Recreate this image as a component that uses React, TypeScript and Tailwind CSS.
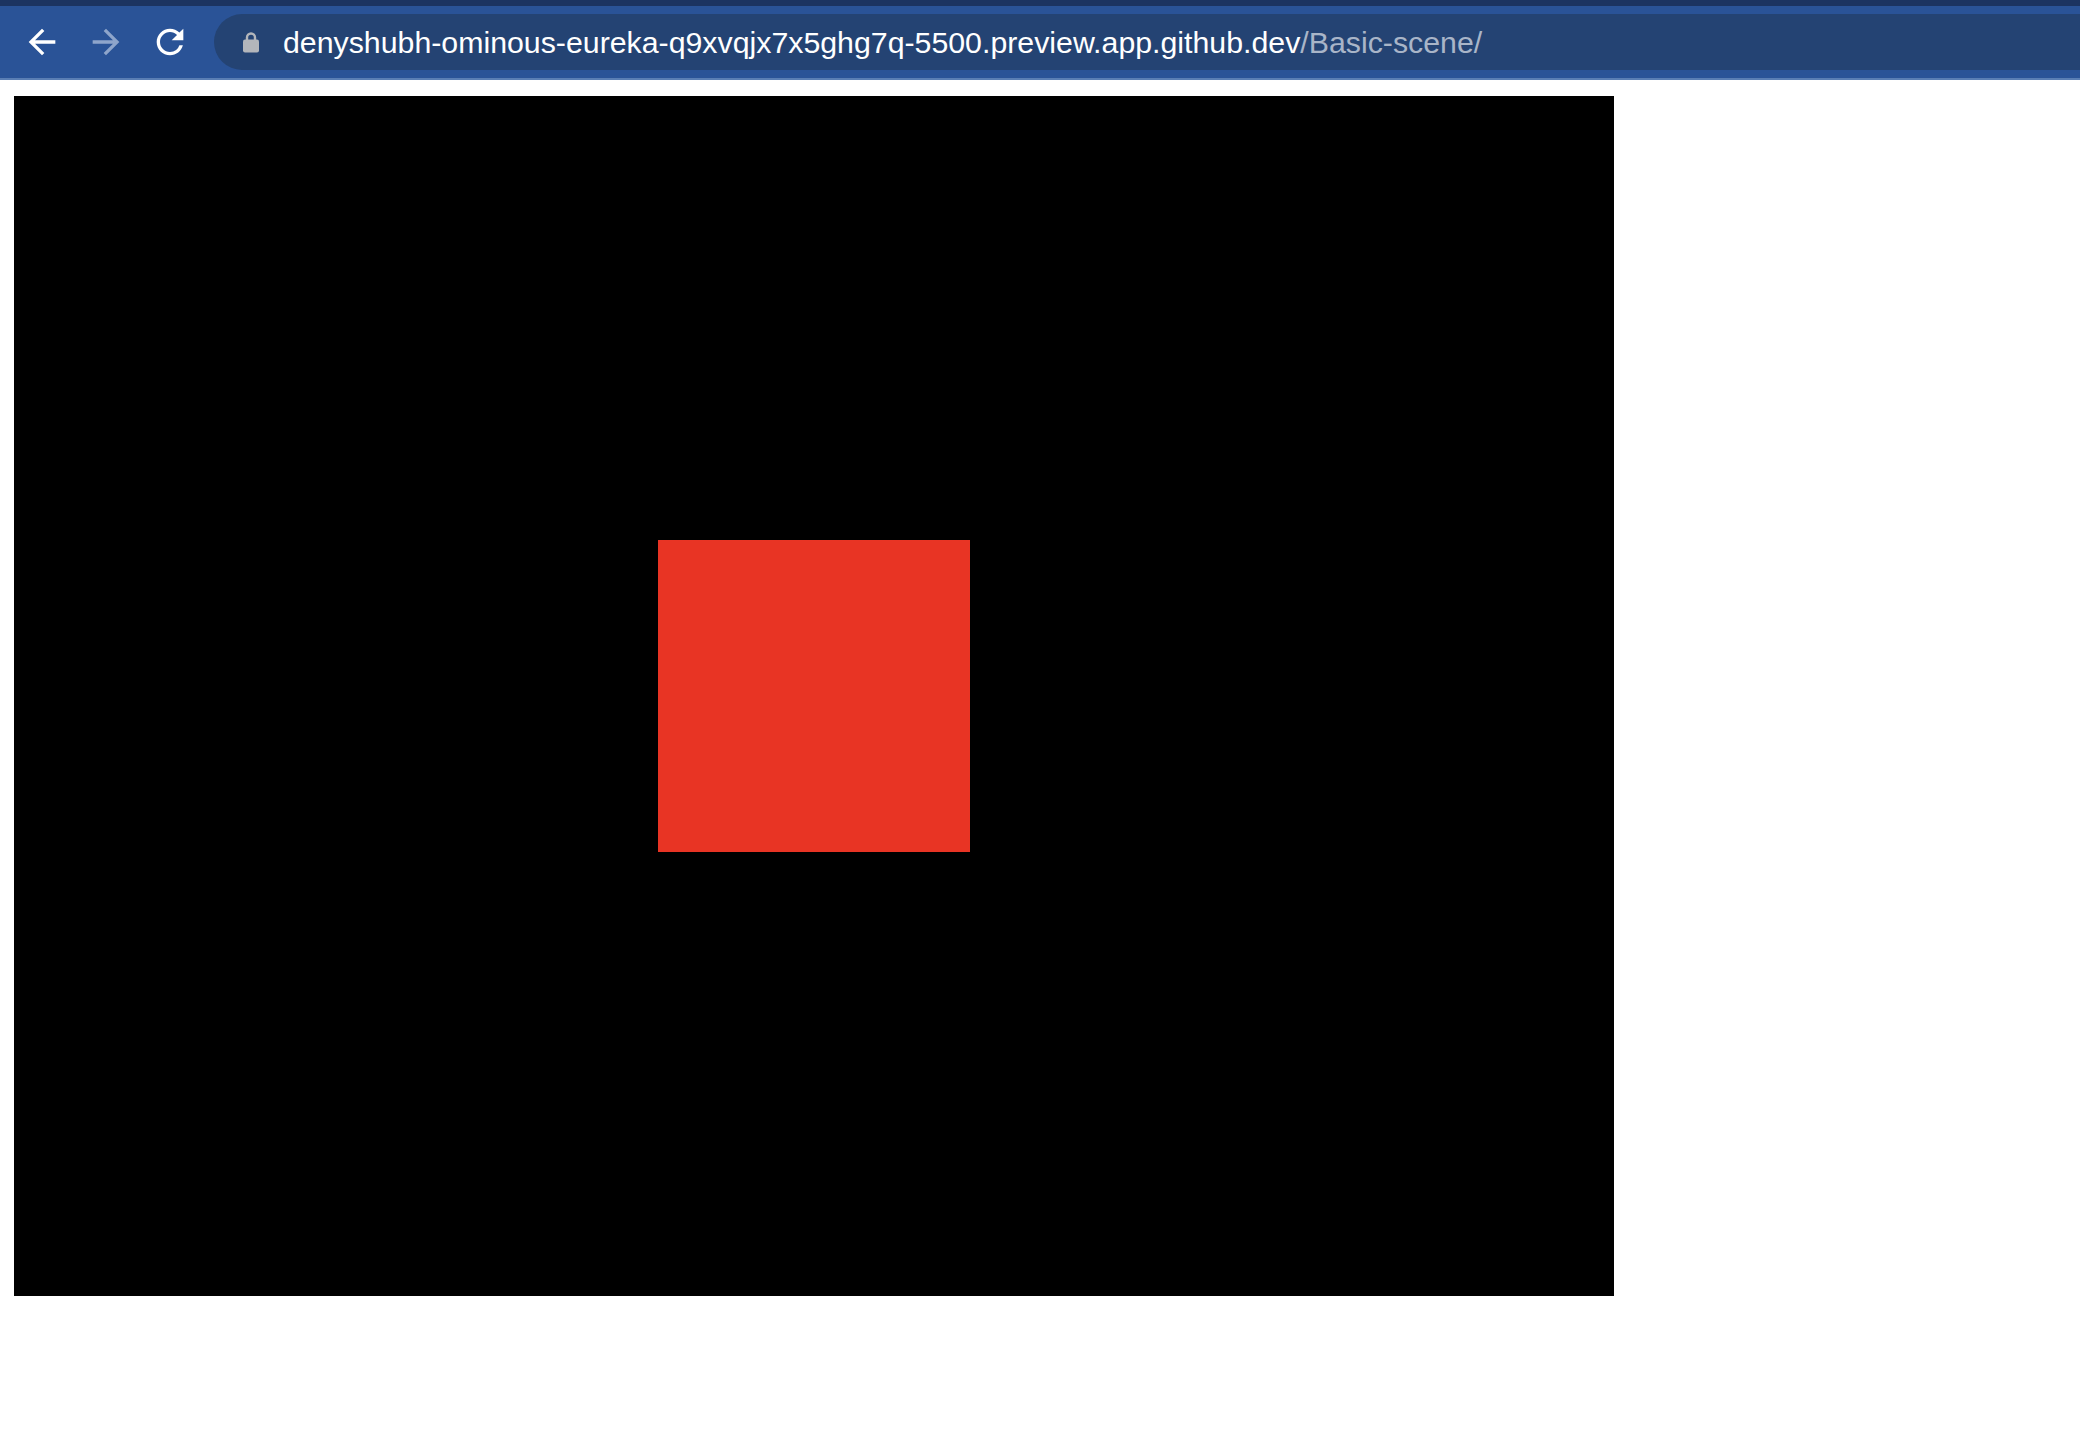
import React from "react";

function BackIcon({ color }: { color: string }) {
  return (
    <svg width="40" height="40" viewBox="0 0 24 24" fill={color}>
      <path d="M20 11H7.83l5.59-5.59L12 4l-8 8 8 8 1.41-1.41L7.83 13H20v-2z" />
    </svg>
  );
}

function ForwardIcon({ color }: { color: string }) {
  return (
    <svg width="40" height="40" viewBox="0 0 24 24" fill={color}>
      <path d="M12 4l-1.41 1.41L16.17 11H4v2h12.17l-5.58 5.59L12 20l8-8z" />
    </svg>
  );
}

function ReloadIcon() {
  return (
    <svg width="40" height="40" viewBox="0 0 24 24" fill="#ffffff">
      <path d="M17.65 6.35A7.958 7.958 0 0 0 12 4c-4.42 0-7.99 3.58-7.99 8s3.57 8 7.99 8c3.73 0 6.84-2.55 7.73-6h-2.08A5.99 5.99 0 0 1 12 18c-3.31 0-6-2.69-6-6s2.69-6 6-6c1.66 0 3.14.69 4.22 1.78L13 11h7V4l-2.35 2.35z" />
    </svg>
  );
}

function LockIcon() {
  return (
    <svg width="16" height="22" viewBox="0 0 16 22">
      <path
        d="M4 9V6.5a4 4 0 0 1 8 0V9"
        fill="none"
        stroke="#b3b6bb"
        strokeWidth="2.4"
      />
      <rect x="0" y="8.5" width="16" height="13" rx="2" fill="#b3b6bb" />
    </svg>
  );
}

export default function App() {
  return (
    <div className="w-[2080px] h-[1438px] bg-white overflow-hidden flex flex-col">
      <div className="flex flex-col shrink-0">
        <div className="h-[6px] bg-[#1c3461]" />
        <div className="h-[72px] bg-[#2a5397] flex items-center pl-[22px] gap-[24px]">
          <div className="w-[40px] h-[40px] flex items-center justify-center">
            <BackIcon color="#ffffff" />
          </div>
          <div className="w-[40px] h-[40px] flex items-center justify-center">
            <ForwardIcon color="#8ea5cb" />
          </div>
          <div className="w-[40px] h-[40px] flex items-center justify-center">
            <ReloadIcon />
          </div>
          <div className="flex-1 h-[56px] bg-[#244373] rounded-l-[28px] flex items-center pl-[29px] -mr-[40px]">
            <LockIcon />
            <div
              className="ml-[24px] mt-[2px] text-[30.3px] leading-none whitespace-nowrap text-white"
              style={{ fontFamily: '"Liberation Sans", Arial, sans-serif' }}
            >
              denyshubh-ominous-eureka-q9xvqjx7x5ghg7q-5500.preview.app.github.dev
              <span className="text-[#a9b5c8]">/Basic-scene/</span>
            </div>
          </div>
        </div>
        <div className="h-[2px] bg-[#5a7eb4]" />
      </div>
      <div className="pt-[16px] pl-[14px]">
        <div className="w-[1600px] h-[1200px] bg-black flex items-center justify-center">
          <div className="w-[312px] h-[312px] bg-[#e83424]" />
        </div>
      </div>
    </div>
  );
}
